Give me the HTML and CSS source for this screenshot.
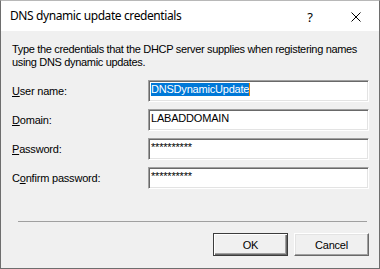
FILE: index.html
```html
<!DOCTYPE html>
<html>
<head>
<meta charset="utf-8">
<link rel="stylesheet" href="styles.css">
</head>
<body>
<div class="window">
  <div class="titlebar">
    <span class="title">DNS dynamic update credentials</span>
    <div class="caption-btn help">?</div>
    <div class="caption-btn close">
      <svg width="10" height="10" viewBox="0 0 10 10"><path d="M0.5 0.5 L9.5 9.5 M9.5 0.5 L0.5 9.5" stroke="#000" stroke-width="1" fill="none"/></svg>
    </div>
  </div>
  <div class="body">
    <p class="desc">Type the credentials that the DHCP server supplies when registering names<br>using DNS dynamic updates.</p>
    <div class="form">
      <div class="label"><u>U</u>ser name:</div>
      <div class="field"><span class="sel">DNSDynamicUpdate</span><span class="caret"></span></div>
      <div class="label"><u>D</u>omain:</div>
      <div class="field">LABADDOMAIN</div>
      <div class="label"><u>P</u>assword:</div>
      <div class="field">**********</div>
      <div class="label">C<u>o</u>nfirm password:</div>
      <div class="field">**********</div>
    </div>
    <div class="sep"></div>
    <div class="buttons">
      <button class="btn default">OK</button>
      <button class="btn">Cancel</button>
    </div>
  </div>
</div>
</body>
</html>
```

FILE: styles.css
```css
html, body {
  margin: 0;
  padding: 0;
  background: #f0f0f0;
}

.window {
  width: 380px;
  height: 269px;
  box-sizing: border-box;
  border: 1px solid #6e6e6e;
  border-top-color: #b8b8b8;
  background: #f0f0f0;
  display: flex;
  flex-direction: column;
  font-family: "Liberation Sans", Arial, sans-serif;
  font-size: 11px;
  color: #000;
}

.titlebar {
  height: 30px;
  background: #fff;
  display: flex;
  align-items: stretch;
}

.title {
  flex: 1;
  padding-left: 9px;
  font-family: "Noto Sans", "Open Sans", sans-serif;
  font-size: 12px;
  line-height: 30px;
  letter-spacing: -0.4px;
}

.caption-btn {
  width: 46px;
  display: flex;
  align-items: center;
  justify-content: center;
}

.help {
  font-family: "Noto Sans", sans-serif;
  font-size: 13px;
  padding-top: 1px;
  box-sizing: border-box;
}

.close svg {
  display: block;
  margin-top: 2px;
}

.body {
  flex: 1;
  padding: 12px 10px 0 11px;
  display: flex;
  flex-direction: column;
}

.desc {
  margin: 0;
  line-height: 13px;
  letter-spacing: -0.33px;
}

.form {
  display: grid;
  grid-template-columns: 136px 1fr;
  row-gap: 7px;
  margin-top: 11px;
}

.label {
  padding-top: 5px;
  line-height: 13px;
  letter-spacing: -0.2px;
}

.label u {
  text-underline-offset: 1px;
}

.field {
  height: 22px;
  box-sizing: border-box;
  border: 1px solid;
  border-color: #a0a0a0 #fff #fff #a0a0a0;
  box-shadow: inset 1px 1px #696969, inset -1px -1px #e3e3e3;
  background: #fff;
  padding: 2px 2px 0 2px;
  line-height: 13px;
  letter-spacing: -0.2px;
  white-space: nowrap;
  overflow: hidden;
}

.sel {
  background: #0078d7;
  color: #fff;
  display: inline-block;
  height: 13px;
  vertical-align: top;
}

.caret {
  display: inline-block;
  width: 1px;
  height: 13px;
  background: #f08700;
  vertical-align: top;
}

.sep {
  height: 1px;
  background: #a0a0a0;
  margin: 32px 2px 0 6px;
}

.buttons {
  display: flex;
  justify-content: flex-end;
  gap: 6px;
  margin-top: 11px;
}

.btn {
  width: 75px;
  height: 23px;
  box-sizing: border-box;
  margin: 0;
  padding: 0;
  font-family: "Liberation Sans", Arial, sans-serif;
  font-size: 11px;
  letter-spacing: -0.2px;
  color: #000;
  background: #f0f0f0;
  border: 1px solid;
  border-color: #fff #696969 #696969 #fff;
  box-shadow: inset -1px -1px #a0a0a0, inset 1px 1px #e3e3e3;
}

.btn.default {
  border-color: #3c3c3c;
  box-shadow: inset 1px 1px #fff, inset -1px -1px #696969, inset -2px -2px #a0a0a0;
}
```
